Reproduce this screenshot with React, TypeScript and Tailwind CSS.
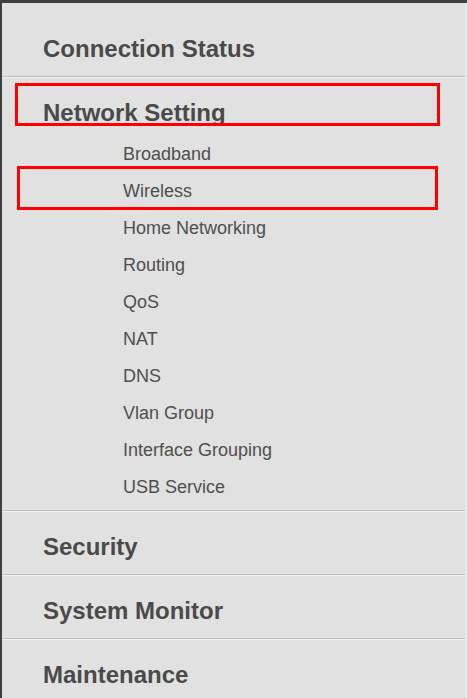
const subItems = [
  "Broadband",
  "Wireless",
  "Home Networking",
  "Routing",
  "QoS",
  "NAT",
  "DNS",
  "Vlan Group",
  "Interface Grouping",
  "USB Service",
];

const sep = "border-t border-[#bdbdbd] shadow-[inset_0_1px_0_#f3f3f3]";

function Heading({ label, top = "pt-[22px]", bottom = "pb-[14px]" }: { label: string; top?: string; bottom?: string }) {
  return (
    <div className={`${top} ${bottom} pl-[41px] text-[24px] leading-[27px] font-bold text-[#4a4a4a]`}>{label}</div>
  );
}

export default function App() {
  return (
    <div className="relative w-[467px] h-[698px] overflow-hidden bg-[#3f3f3f] font-['Liberation_Sans',Arial,sans-serif]">
      <div className="ml-[2px] mt-[3px] w-[465px] h-[695px] bg-[#e1e1e1] border-r-2 border-[#ebebeb]">
        <Heading label="Connection Status" top="pt-[32px]" />

        <div className={sep}>
          <Heading label="Network Setting" top="pt-[22px]" bottom="pb-[10px]" />
          <ul className="pb-[4px]">
            {subItems.map((item) => (
              <li key={item} className="pl-[121px] text-[18px] leading-[37px] text-[#4f4f4f]">
                {item}
              </li>
            ))}
          </ul>
        </div>

        <div className={sep}>
          <Heading label="Security" />
        </div>
        <div className={sep}>
          <Heading label="System Monitor" />
        </div>
        <div className={sep}>
          <Heading label="Maintenance" />
        </div>
      </div>

      {/* red highlight annotations */}
      <div className="absolute left-[15px] top-[83px] w-[425px] h-[43px] border-[3px] border-[#ff0000]" />
      <div className="absolute left-[17px] top-[166px] w-[421px] h-[44px] border-[3px] border-[#ff0000]" />
    </div>
  );
}
